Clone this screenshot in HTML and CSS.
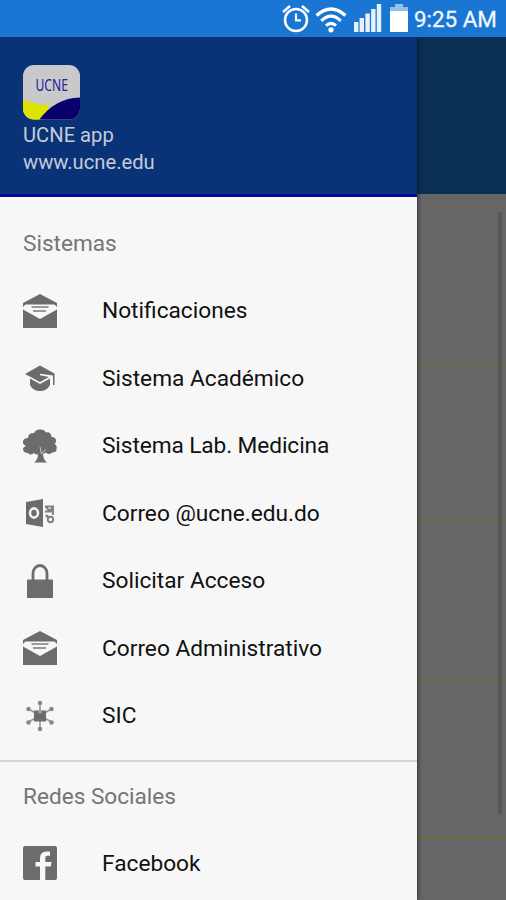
FILE: index.html
```html
<!DOCTYPE html>
<html lang="es">
<head>
<meta charset="utf-8">
<title>UCNE app</title>
<link rel="stylesheet" href="styles.css">
</head>
<body>
<svg class="defs" width="0" height="0" aria-hidden="true">
  <symbol id="mail" viewBox="0 0 34 34">
    <path d="M0 13V9L17 0l17 9v4l-2.500-2.500h-29z"/>
    <path d="M0 15.500L17 25l17-9.500V34H0z"/>
    <path d="M8.500 13h17M10 17h13" stroke="#9a9a9a" stroke-width="2"/>
  </symbol>
</svg>
<header class="status">
  <svg class="alarm" viewBox="0 0 28 28" fill="none" stroke="#fff">
    <circle cx="14" cy="15.500" r="11" stroke-width="2.500"/>
    <path d="M14 9v6.800h5" stroke-width="2.200"/>
    <path d="M1 7.500L8 1.500M27 7.500L20 1.500" stroke-width="2.500"/>
  </svg>
  <svg class="wifi" viewBox="0 0 32 26" fill="none" stroke="#fff" stroke-width="3.200">
    <path d="M1.500 8.500Q16-4.500 30.500 8.500M6.300 13.800Q16 4.500 25.700 13.800M11 18.700Q16 14 21 18.700"/>
    <circle cx="16" cy="22.800" r="2.600" fill="#fff" stroke="none"/>
  </svg>
  <svg class="signal" viewBox="0 0 28 28" fill="#fff">
    <path d="M0 18h4.400v10H0zM5.600 14H10v14H5.600zM11.400 9.500h4.400V28h-4.400zM17.100 5h4.400v23h-4.400zM22.800 0h4.400v28h-4.400z" fill-opacity=".9"/>
  </svg>
  <svg class="battery" viewBox="0 0 18 28">
    <path d="M5 0h8v3h5v5H0V3h5z" fill="#8fc1ef"/>
    <path d="M0 7h18v21H0z" fill="#fff"/>
  </svg>
  <span class="clock">9:25 AM</span>
</header>
<main class="screen">
  <aside class="drawer">
    <div class="profile">
      <svg class="logo" viewBox="0 0 57 55">
        <defs><clipPath id="tile"><rect width="57" height="54.500" rx="11"/></clipPath></defs>
        <g clip-path="url(#tile)">
          <path d="M0 0h57v55H0z" fill="#c9c9cb"/>
          <path d="M0 34q12 6 27 6L19 55H0z" fill="#dfe500"/>
          <path d="M16 55Q32 33 57 32.500V55z" fill="#09006c"/>
        </g>
        <text class="logo-text" x="12.500" y="25.500" textLength="32.500" lengthAdjust="spacingAndGlyphs">UCNE</text>
      </svg>
      <span class="name">UCNE app</span>
      <span class="site">www.ucne.edu</span>
    </div>
    <nav class="menu">
      <h2 class="label">Sistemas</h2>
      <a class="item"><svg class="icon" viewBox="0 0 34 34"><use href="#mail"/></svg><span>Notificaciones</span></a>
      <a class="item"><svg class="icon" viewBox="0 0 34 34"><path d="M2 13L17 4.500l14.500 8V24H30V14.500l-13-1.700v1.500l9 1.700-9 5z"/><path d="M7 17.500l10 5.500 10-5.500V24q-3 6-10 6T7 24z"/></svg><span>Sistema Académico</span></a>
      <a class="item"><svg class="icon" viewBox="0 0 34 34"><path d="M11 33.500q4-3 4-8-3 0-4-1.500-4 3-6 0-5 0-5-4.500 1-2 3-2.500-4-2-3-5 1-3 5-3 0-5 6-5 2-4 6-3.500 4-.5 6 3 5-1 5.500 4.500 5 0 4.500 5-.5 1-1.500 1.500 3 3 2 5 .5 4-4.500 4-3 3-6 0l-3 1.500q0 5 4 8.500z"/><path d="M17 18l1.500 7 4-4.500" fill="none" stroke="#c8c8c8" stroke-width="1"/></svg><span class="tight">Sistema Lab. Medicina</span></a>
      <a class="item"><svg class="icon" viewBox="0 0 34 34"><path d="M3 6l17-3v28L3 28z"/><ellipse cx="11" cy="17" rx="4" ry="4.600" fill="none" stroke="#f2f2f2" stroke-width="2.600"/><path d="M22 10.500h9M22 15.500h7M30 10v9M23 11l3.500 4 3.500-4" fill="none" stroke="#808080" stroke-width="1.900"/><circle cx="24" cy="20" r="1.600" fill="#808080"/><circle cx="27.500" cy="23.500" r="2.700" fill="none" stroke="#808080" stroke-width="1.900"/></svg><span>Correo @ucne.edu.do</span></a>
      <a class="item"><svg class="icon" viewBox="0 0 34 34"><path d="M4 15.500h26V34H4z"/><path d="M10 16V9.500a7 8 0 0 1 14 0V16" fill="none" stroke="#6c6c6c" stroke-width="2.800"/></svg><span>Solicitar Acceso</span></a>
      <a class="item"><svg class="icon" viewBox="0 0 34 34"><use href="#mail"/></svg><span>Correo Administrativo</span></a>
      <a class="item"><svg class="icon" viewBox="0 0 34 34"><path d="M17 4v26M5.500 10l23 13M28.500 10l-23 13" stroke="#999" stroke-width="1.700"/><path d="M11 11.500h12v11H11z"/><path d="M15.500 11.500h3v3h-3z" fill="#aaa"/><g fill="#888"><circle cx="17" cy="4" r="2.200"/><circle cx="17" cy="30" r="2.200"/><circle cx="5.500" cy="10" r="2.300"/><circle cx="28.500" cy="10" r="2.300"/><circle cx="5.500" cy="23.500" r="2.300"/><circle cx="28.500" cy="23.500" r="2.300"/></g></svg><span>SIC</span></a>
      <hr class="divider">
      <h2 class="label">Redes Sociales</h2>
      <a class="item last"><svg class="icon" viewBox="0 0 34 34"><rect width="34" height="34" rx="2"/><path d="M17 34V20.500h-4.500V16H17v-4q0-6.500 6.500-6.500H27v4.300h-2.700Q22.300 9.800 22.300 12v4h6.200l-.6 4.500h-5.600V34z" fill="#f7f7f7"/></svg><span>Facebook</span></a>
    </nav>
  </aside>
  <section class="page">
    <div class="appbar"></div>
    <div class="rows">
      <div class="row first"></div>
      <div class="row"></div>
      <div class="row"></div>
      <div class="row"></div>
      <div class="scrollbar"></div>
    </div>
  </section>
</main>
</body>
</html>
```
FILE: styles.css
```css
* { box-sizing: border-box; }
body {
  margin: 0;
  height: 900px;
  overflow: hidden;
  display: flex;
  flex-direction: column;
  background: #666;
  font-family: Roboto, "Liberation Sans", sans-serif;
}
.defs { position: absolute; }
.status {
  position: relative;
  z-index: 2;
  height: 37px;
  flex: none;
  display: flex;
  align-items: flex-start;
  padding: 4px 0 0 281.5px;
  background: #1976d2;
}
.alarm { width: 28px; height: 29px; margin-right: 5.5px; }
.wifi { width: 32px; height: 26px; margin: 3px 7px 0 0; }
.signal { width: 28px; height: 28px; margin-right: 8px; }
.battery { width: 18px; height: 28px; margin-right: 6px; }
.clock {
  color: #f0f6fd;
  font-size: 22.4px;
  line-height: 31px;
  white-space: nowrap;
  -webkit-text-stroke: .3px #f0f6fd;
}
.screen { flex: 1; min-height: 0; display: flex; }
.drawer {
  position: relative;
  width: 417px;
  flex: none;
  background: #f7f7f7;
  box-shadow: 0 0 5px rgba(0, 0, 0, .75);
  z-index: 1;
}
.profile {
  height: 160px;
  display: flex;
  flex-direction: column;
  align-items: flex-start;
  padding: 27.5px 0 0 23px;
  background: #0a3377;
  border-bottom: 3px solid #00079a;
  color: #c5cbd8;
  font-size: 20.2px;
  line-height: 27px;
}
.logo { width: 57px; height: 55px; margin-bottom: 2.5px; flex: none; }
.logo-text { font-family: "Noto Sans", sans-serif; font-size: 15.5px; fill: #23209a; }
.menu { padding-top: 12.5px; }
.label {
  margin: 0;
  height: 67.5px;
  padding-left: 23px;
  line-height: 67.5px;
  font-size: 22.6px;
  font-weight: 400;
  color: #757575;
}
.item {
  height: 67.5px;
  display: flex;
  align-items: center;
  padding-left: 23px;
  gap: 45px;
  font-size: 22.7px;
  color: #111;
}
.item span, .label, .name, .site { white-space: nowrap; }
.item .tight { letter-spacing: -.1px; }
.item.last { height: 65.5px; }
.icon { width: 34px; height: 34px; fill: #6c6c6c; flex: none; }
.divider {
  height: 2px;
  margin: 10.5px 0 1px;
  border: 0;
  background: #d6d6d6;
}
.page { flex: 1; display: flex; flex-direction: column; }
.appbar { height: 157px; flex: none; background: #0a2f54; }
.rows { flex: 1; position: relative; background: #666; }
.row { height: 157.7px; border-bottom: 2px solid #6c6c38; }
.row.first { height: 170.6px; }
.scrollbar {
  position: absolute;
  top: 18px;
  right: 4px;
  width: 4px;
  height: 602px;
  background: #585858;
}
```
